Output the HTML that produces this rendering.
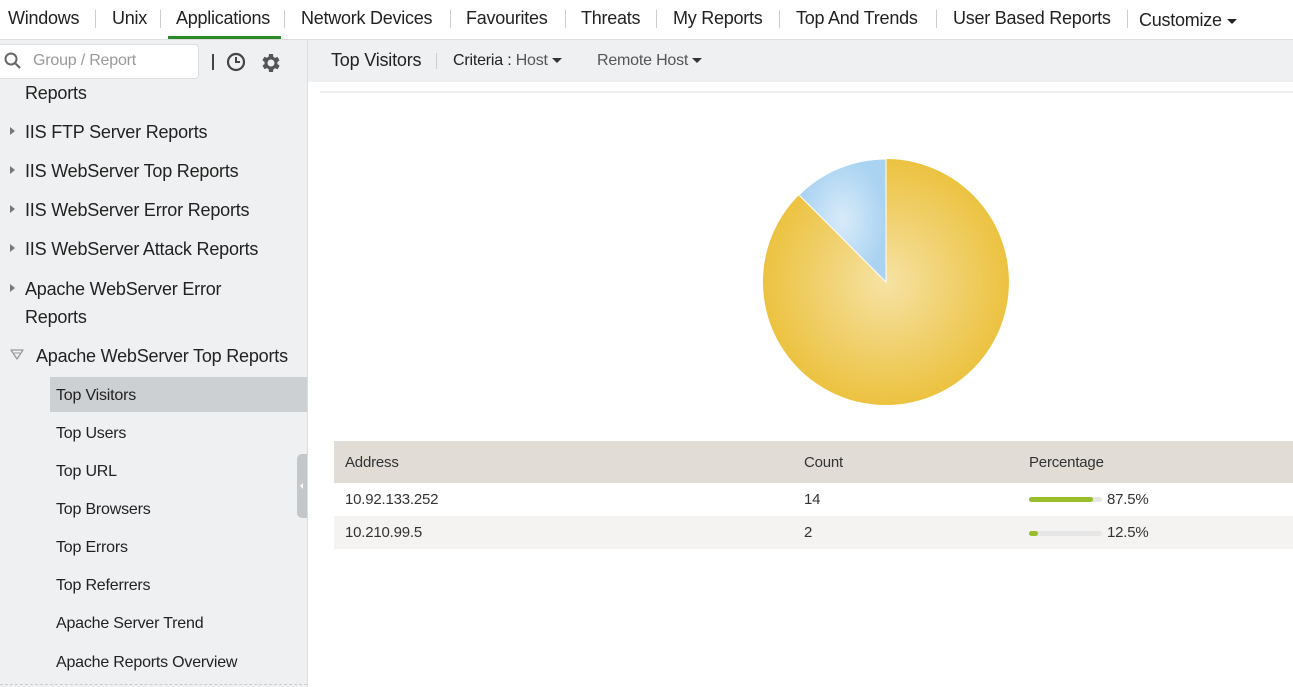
<!DOCTYPE html>
<html><head><style>
body{margin:0;width:1293px;height:687px;overflow:hidden;font-family:"Liberation Sans",sans-serif;background:#fff;position:relative;color:#222}
.nav{position:absolute;top:0;left:0;width:1293px;height:39px;border-bottom:1px solid #ddd;background:#fff}
.nav span{position:absolute;top:8px;font-size:18px;color:#222;letter-spacing:-0.25px}
.sep{position:absolute;top:10px;width:1px;height:18px;background:#ccc}
.side{position:absolute;top:40px;left:0;width:307px;height:647px;background:#eff0f1;border-right:1px solid #ddd}
.it{position:absolute;font-size:18px;color:#222;letter-spacing:-0.2px}
.sub{position:absolute;left:56px;font-size:16px;color:#222;letter-spacing:-0.2px}
.arr{position:absolute;left:10px;width:0;height:0;border-left:5px solid #777;border-top:4px solid transparent;border-bottom:4px solid transparent}
.tb{position:absolute;top:40px;left:308px;width:985px;height:42px;background:#eef0f1}
.tb span{position:absolute;top:12px;letter-spacing:-0.2px}
.t{position:absolute;font-size:15px;letter-spacing:-0.2px;color:#333}
</style></head><body>
<div class="nav">
<span style="left:8px">Windows</span><div class="sep" style="left:95px"></div>
<span style="left:112px">Unix</span><div class="sep" style="left:160px"></div>
<span style="left:176px">Applications</span><div class="sep" style="left:284px"></div>
<span style="left:301px">Network Devices</span><div class="sep" style="left:450px"></div>
<span style="left:466px">Favourites</span><div class="sep" style="left:565px"></div>
<span style="left:581px">Threats</span><div class="sep" style="left:656px"></div>
<span style="left:673px">My Reports</span><div class="sep" style="left:779px"></div>
<span style="left:796px">Top And Trends</span><div class="sep" style="left:936px"></div>
<span style="left:953px">User Based Reports</span><div class="sep" style="left:1127px"></div>
<span style="left:1139px;top:10px">Customize <span style="position:static;display:inline-block;width:0;height:0;border-top:5px solid #222;border-left:5px solid transparent;border-right:5px solid transparent;vertical-align:middle"></span></span>
<div style="position:absolute;left:168px;top:36px;width:113px;height:3px;background:#2a8a2a"></div>
</div>
<div class="side">
<div style="position:absolute;left:0;top:4px;width:198px;height:33px;background:#fff;border:1px solid #ddd;border-left:none;border-radius:0 4px 4px 0"></div>
<svg style="position:absolute;left:4px;top:12px" width="18" height="18"><circle cx="7" cy="7" r="5.5" fill="none" stroke="#666" stroke-width="2"/><line x1="11" y1="11" x2="16" y2="16" stroke="#666" stroke-width="2"/></svg>
<span style="position:absolute;left:33px;top:12px;font-size:16px;color:#999;letter-spacing:-0.2px">Group / Report</span>
<div style="position:absolute;left:212px;top:14px;width:2px;height:16px;background:#444"></div>
<svg style="position:absolute;left:226px;top:12px" width="20" height="20"><circle cx="10" cy="10" r="8" fill="none" stroke="#444" stroke-width="2.2"/><path d="M10 5v5h4" fill="none" stroke="#444" stroke-width="2"/></svg>
<svg style="position:absolute;left:258px;top:11px" width="24" height="24" viewBox="0 0 24 24"><path fill="#555" d="M19.4 13a7.5 7.5 0 0 0 0-2l2.1-1.6-2-3.5-2.5 1a7.3 7.3 0 0 0-1.7-1L15 3h-4l-.4 2.7a7.3 7.3 0 0 0-1.7 1l-2.5-1-2 3.5L6.6 11a7.5 7.5 0 0 0 0 2l-2.1 1.6 2 3.5 2.5-1a7.3 7.3 0 0 0 1.7 1L11 21h4l.4-2.7a7.3 7.3 0 0 0 1.7-1l2.5 1 2-3.5zM13 15.5a3.5 3.5 0 1 1 0-7 3.5 3.5 0 0 1 0 7z"/></svg>
</div>
<div class="it" style="left:25px;top:83px">Reports</div>
<div class="arr" style="top:127px"></div><div class="it" style="left:25px;top:122px">IIS FTP Server Reports</div>
<div class="arr" style="top:166px"></div><div class="it" style="left:25px;top:161px">IIS WebServer Top Reports</div>
<div class="arr" style="top:205px"></div><div class="it" style="left:25px;top:200px">IIS WebServer Error Reports</div>
<div class="arr" style="top:244px"></div><div class="it" style="left:25px;top:239px">IIS WebServer Attack Reports</div>
<div class="arr" style="top:284px"></div><div class="it" style="left:25px;top:279px">Apache WebServer Error</div>
<div class="it" style="left:25px;top:307px">Reports</div>
<svg style="position:absolute;left:9px;top:348px" width="16" height="14"><path d="M2 2h12l-6 9z" fill="none" stroke="#999" stroke-width="1.3" stroke-linejoin="round"/><line x1="5" y1="5" x2="11" y2="5" stroke="#999"/></svg>
<div class="it" style="left:36px;top:346px">Apache WebServer Top Reports</div>
<div style="position:absolute;left:50px;top:377px;width:257px;height:35px;background:#cdd0d3"></div>
<div class="sub" style="top:387px">Top Visitors</div>
<div class="sub" style="top:425px">Top Users</div>
<div class="sub" style="top:463px">Top URL</div>
<div class="sub" style="top:501px">Top Browsers</div>
<div class="sub" style="top:539px">Top Errors</div>
<div class="sub" style="top:577px">Top Referrers</div>
<div class="sub" style="top:615px">Apache Server Trend</div>
<div class="sub" style="top:654px">Apache Reports Overview</div>
<div style="position:absolute;left:0;top:684px;width:307px;border-top:1px dashed #ccc"></div>
<div style="position:absolute;left:297px;top:454px;width:10px;height:64px;background:#c3c7ca;border-radius:5px 0 0 5px"></div>
<div style="position:absolute;left:300px;top:483px;width:0;height:0;border-right:3px solid #fff;border-top:3px solid transparent;border-bottom:3px solid transparent"></div>
<div class="tb">
<span style="left:23px;font-size:18px;top:10px">Top Visitors</span>
<div style="position:absolute;left:128px;top:13px;width:1px;height:16px;background:#ccc"></div>
<span style="left:145px;font-size:16px">Criteria : <span style="position:static;color:#555">Host</span> <span style="position:static;display:inline-block;border-top:5px solid #333;border-left:5px solid transparent;border-right:5px solid transparent;vertical-align:middle"></span></span>
<span style="left:289px;font-size:16px;color:#555">Remote Host <span style="position:static;display:inline-block;border-top:5px solid #333;border-left:5px solid transparent;border-right:5px solid transparent;vertical-align:middle"></span></span>
</div>
<div style="position:absolute;left:320px;top:91px;width:973px;height:2px;background:#eee"></div>
<svg style="position:absolute;left:760px;top:156px" width="252" height="252">
<defs><radialGradient id="g" cx="50%" cy="50%" r="50%"><stop offset="0" stop-color="#f6e2a4"/><stop offset="1" stop-color="#ecc240"/></radialGradient>
<radialGradient id="b" cx="50%" cy="50%" r="50%"><stop offset="0" stop-color="#d8ebf9"/><stop offset="1" stop-color="#aad3f2"/></radialGradient></defs>
<path d="M126 126V3A123 123 0 1 1 39 39Z" fill="url(#g)"/>
<path d="M126 126L39 39A123 123 0 0 1 126 3Z" fill="url(#b)" stroke="#fff" stroke-width="1"/>
</svg>
<div style="position:absolute;left:334px;top:441px;width:959px;height:42px;background:#e1ddd6"></div>
<div style="position:absolute;left:334px;top:516px;width:959px;height:33px;background:#f4f3f1"></div>
<div class="t" style="left:345px;top:454px">Address</div>
<div class="t" style="left:804px;top:454px">Count</div>
<div class="t" style="left:1029px;top:454px">Percentage</div>
<div class="t" style="left:345px;top:491px">10.92.133.252</div>
<div class="t" style="left:804px;top:491px">14</div>
<div style="position:absolute;left:1029px;top:497px;width:73px;height:5px;background:#e6e6e6;border-radius:3px"><div style="width:64px;height:5px;background:#97bd2a;border-radius:3px"></div></div>
<div class="t" style="left:1107px;top:491px">87.5%</div>
<div class="t" style="left:345px;top:524px">10.210.99.5</div>
<div class="t" style="left:804px;top:524px">2</div>
<div style="position:absolute;left:1029px;top:531px;width:73px;height:5px;background:#e6e6e6;border-radius:3px"><div style="width:9px;height:5px;background:#97bd2a;border-radius:3px"></div></div>
<div class="t" style="left:1107px;top:524px">12.5%</div>
</body></html>
